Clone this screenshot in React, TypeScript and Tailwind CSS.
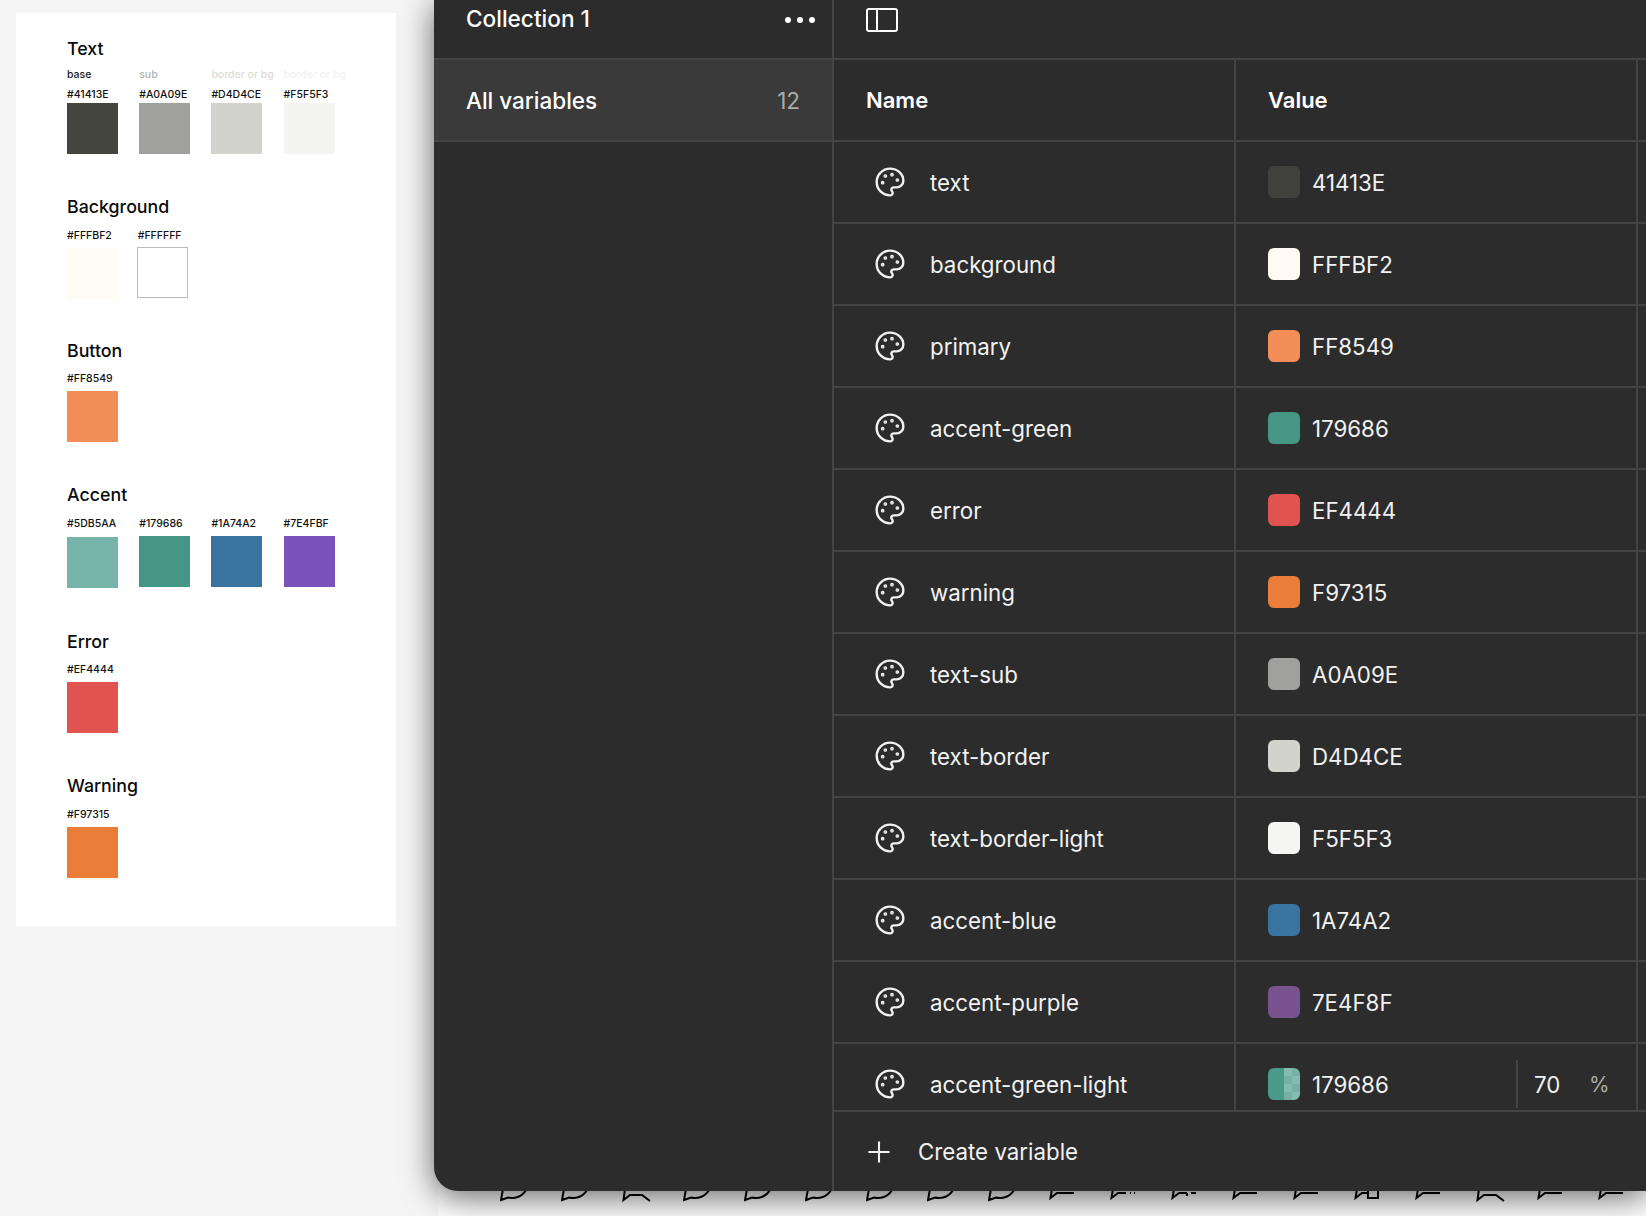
import { Palette, Plus } from "lucide-react";

const font = { fontFamily: "Inter, 'Liberation Sans', sans-serif" };

const groups = [
  {
    title: "Text",
    labels: [
      { text: "base", cls: "text-[#222222]" },
      { text: "sub", cls: "text-[#b4b4b2]" },
      { text: "border or bg", cls: "text-[#dcdcd8]" },
      { text: "border or bg", cls: "text-[#f3f3f1]" },
    ],
    swatches: [
      { hex: "#41413E", cls: "bg-[#44453f]" },
      { hex: "#A0A09E", cls: "bg-[#a0a09e]" },
      { hex: "#D4D4CE", cls: "bg-[#d2d3cd]" },
      { hex: "#F5F5F3", cls: "bg-[#f4f4f2]" },
    ],
    mt: "mt-[24px]",
    hexMt: "mt-[6px]",
    swatchMt: "mt-px",
  },
  {
    title: "Background",
    swatches: [
      { hex: "#FFFBF2", cls: "bg-[#fffcf5]" },
      { hex: "#FFFFFF", cls: "bg-white border border-[#bbbbbb] -ml-px -mt-px", wrap: "-ml-[1.5px]" },
    ],
    mt: "mt-[42px]",
    hexMt: "mt-[11px]",
    swatchMt: "mt-[5px]",
  },
  {
    title: "Button",
    swatches: [{ hex: "#FF8549", cls: "bg-[#f38e58]" }],
    mt: "mt-[41px]",
    hexMt: "mt-[10px]",
    swatchMt: "mt-[5px]",
  },
  {
    title: "Accent",
    swatches: [
      { hex: "#5DB5AA", cls: "bg-[#76b4a9] translate-y-px" },
      { hex: "#179686", cls: "bg-[#469686]" },
      { hex: "#1A74A2", cls: "bg-[#3973a0]" },
      { hex: "#7E4FBF", cls: "bg-[#7a52b9]" },
    ],
    mt: "mt-[42px]",
    hexMt: "mt-[11px]",
    swatchMt: "mt-[5px]",
  },
  {
    title: "Error",
    swatches: [{ hex: "#EF4444", cls: "bg-[#e0534f]" }],
    mt: "mt-[44px]",
    hexMt: "mt-[10px]",
    swatchMt: "mt-[5px]",
  },
  {
    title: "Warning",
    swatches: [{ hex: "#F97315", cls: "bg-[#ea7e38]" }],
    mt: "mt-[42px]",
    hexMt: "mt-[11px]",
    swatchMt: "mt-[5px]",
  },
];

const rows = [
  { name: "text", value: "41413E", cls: "bg-[#41413e]" },
  { name: "background", value: "FFFBF2", cls: "bg-[#fffbf2]" },
  { name: "primary", value: "FF8549", cls: "bg-[#f38e58]" },
  { name: "accent-green", value: "179686", cls: "bg-[#469686]" },
  { name: "error", value: "EF4444", cls: "bg-[#e0534f]" },
  { name: "warning", value: "F97315", cls: "bg-[#ea7e38]" },
  { name: "text-sub", value: "A0A09E", cls: "bg-[#a0a09e]" },
  { name: "text-border", value: "D4D4CE", cls: "bg-[#d2d3cd]" },
  { name: "text-border-light", value: "F5F5F3", cls: "bg-[#f5f5f3]" },
  { name: "accent-blue", value: "1A74A2", cls: "bg-[#3973a0]" },
  { name: "accent-purple", value: "7E4F8F", cls: "bg-[#7a5290]" },
];

// only the bottom edge of these canvas icons shows under the panel
const bubblePaths: Record<string, string> = {
  round: "M3 1L1 12L8 9.5C14 11 22 9 26 2",
  flat: "M3 1L1.5 10L8 5L25 5",
  dots: "M3 1L1.5 10L8 5L16 5M20 5h1M24 5h1",
  ticks: "M3 1L1.5 10L8 5L16 5M16 5v3M20 5h5",
  box: "M3 1L1.5 10L8 5L14 5M14 1V10H24V1",
  cross: "M3 1L1.5 12L8 7L20 7L28 13",
};

const bubbles = [
  "round", "round", "cross", "round", "round", "round", "round", "round", "round", "flat",
  "dots", "ticks", "flat", "flat", "box", "flat", "cross", "flat", "flat",
];

export default function App() {
  return (
    <div style={font} className="flex w-[1646px] h-[1216px] overflow-hidden bg-[#f5f5f5]">
      <div className="w-[434px] shrink-0 pl-4 pt-[13px]">
        <div className="w-[379.5px] h-[913px] bg-white pl-[51px] pt-px">
          {groups.map((g) => (
            <div key={g.title} className={g.mt}>
              <h2 className="text-[17.8px] leading-[22px] font-medium text-[#0a0a0a]">{g.title}</h2>
              {g.labels && (
                <div className="flex gap-[21.2px] mt-[8px]">
                  {g.labels.map((l, i) => (
                    <span key={i} className={`w-[51px] text-[10.5px] leading-[14px] font-medium whitespace-nowrap ${l.cls}`}>
                      {l.text}
                    </span>
                  ))}
                </div>
              )}
              <div className={`flex gap-[21.2px] items-start ${g.hexMt}`}>
                {g.swatches.map((s) => (
                  <div key={s.hex} className={`w-[51px] ${s.wrap ?? ""}`}>
                    <div className="text-[10.5px] leading-[14px] font-medium text-[#111111] whitespace-nowrap">{s.hex}</div>
                    <div className={g.swatchMt}>
                      <div className={`w-[51px] h-[51px] ${s.cls}`} />
                    </div>
                  </div>
                ))}
              </div>
            </div>
          ))}
        </div>
      </div>

      <div className="w-[1212px] shrink-0 flex flex-col">
        <div className="relative z-10 h-[1191px] w-full shrink-0 flex bg-[#2c2c2c] rounded-bl-[24px] text-white shadow-[0_6px_32px_rgba(0,0,0,0.6)]">
          <div className="w-[400px] shrink-0 border-r-2 border-[#444444]">
            <div className="h-[60px] border-b-2 border-[#444444] flex items-center justify-between pl-[32px] pr-[17px] pb-[20px]">
              <span className="text-[22.6px] font-medium">Collection 1</span>
              <span className="flex gap-[6px] translate-y-px">
                <i className="w-[6px] h-[6px] rounded-full bg-white" />
                <i className="w-[6px] h-[6px] rounded-full bg-white" />
                <i className="w-[6px] h-[6px] rounded-full bg-white" />
              </span>
            </div>
            <div className="h-[82px] bg-[#3a3a3a] border-b-2 border-[#444444] flex items-center justify-between pl-[32px] pr-[32px] pt-[2px]">
              <span className="text-[22.5px] font-medium">All variables</span>
              <span className="text-[22.5px] text-[#ababab]">12</span>
            </div>
          </div>
          <div className="flex-1 flex flex-col min-w-0">
            <div className="h-[60px] shrink-0 border-b-2 border-[#444444] flex items-start pl-[32px] pt-[8px]">
              <div className="w-[32px] h-[24px] border-2 border-white rounded-[3px] flex">
                <div className="w-[10px] border-r-2 border-white" />
              </div>
            </div>
            <div className="h-[82px] shrink-0 flex border-b-2 border-[#444444] text-[22px] font-semibold">
              <div className="w-[402px] shrink-0 border-r-2 border-[#444444] flex items-center pl-[32px]">Name</div>
              <div className="w-[402px] shrink-0 border-r-2 border-[#444444] flex items-center pl-[32px]">Value</div>
            </div>
            {rows.map((r) => (
              <div key={r.name} className="h-[82px] shrink-0 flex border-b-2 border-[#444444] text-[22.3px] text-[#f2f2f2]">
                <div className="w-[402px] shrink-0 border-r-2 border-[#444444] flex items-center pl-[40px]">
                  <Palette size={32} strokeWidth={1.8} className="shrink-0" />
                  <span className="ml-[24px] pt-px">{r.name}</span>
                </div>
                <div className="w-[402px] shrink-0 border-r-2 border-[#444444] flex items-center pl-[32px]">
                  <div className={`w-[32px] h-[32px] rounded-[6px] ${r.cls}`} />
                  <span className="ml-[12px] pt-px">{r.value}</span>
                </div>
              </div>
            ))}
            <div className="h-[68px] shrink-0 flex border-b-2 border-[#444444] text-[22.3px] text-[#f2f2f2]">
              <div className="w-[402px] shrink-0 border-r-2 border-[#444444] flex items-center pl-[40px] pt-[14px]">
                <Palette size={32} strokeWidth={1.8} className="shrink-0" />
                <span className="ml-[24px] pt-px">accent-green-light</span>
              </div>
              <div className="w-[402px] shrink-0 border-r-2 border-[#444444] flex items-center pl-[32px] pt-[14px]">
                <div className="w-[32px] h-[32px] rounded-[6px] overflow-hidden flex">
                  <div className="w-1/2 bg-[#4a9a8a]" />
                  <div className="w-1/2 grid grid-cols-2 grid-rows-4">
                    {[0, 1, 2, 3, 4, 5, 6, 7].map((n) => (
                      <div key={n} className={[0, 3, 4, 7].includes(n) ? "bg-[#84bdb0]" : "bg-[#75b0a4]"} />
                    ))}
                  </div>
                </div>
                <span className="ml-[12px] pt-px w-[204px]">179686</span>
                <div className="self-start mt-[2px] h-[48px] w-[2px] bg-[#444444]" />
                <span className="ml-[16px] pt-px w-[55px]">70</span>
                <span className="pt-px text-[21px] text-[#ababab]">%</span>
              </div>
            </div>
            <div className="flex-1 flex items-center pl-[33px] text-[22.3px] text-[#f2f2f2]">
              <Plus size={24} strokeWidth={1.5} className="shrink-0 scale-[1.4]" />
              <span className="ml-[27px]">Create variable</span>
            </div>
          </div>
        </div>
        <div className="relative z-0 -mt-[3px] ml-[4px] pl-[62px] flex-1 bg-[#fcfcfc] flex gap-[31px]">
          {bubbles.map((b, i) => (
            <svg key={i} width="30" height="16" viewBox="0 0 30 16" fill="none" stroke="black" strokeWidth="2" className="shrink-0">
              <path d={bubblePaths[b]} />
            </svg>
          ))}
        </div>
      </div>
    </div>
  );
}
